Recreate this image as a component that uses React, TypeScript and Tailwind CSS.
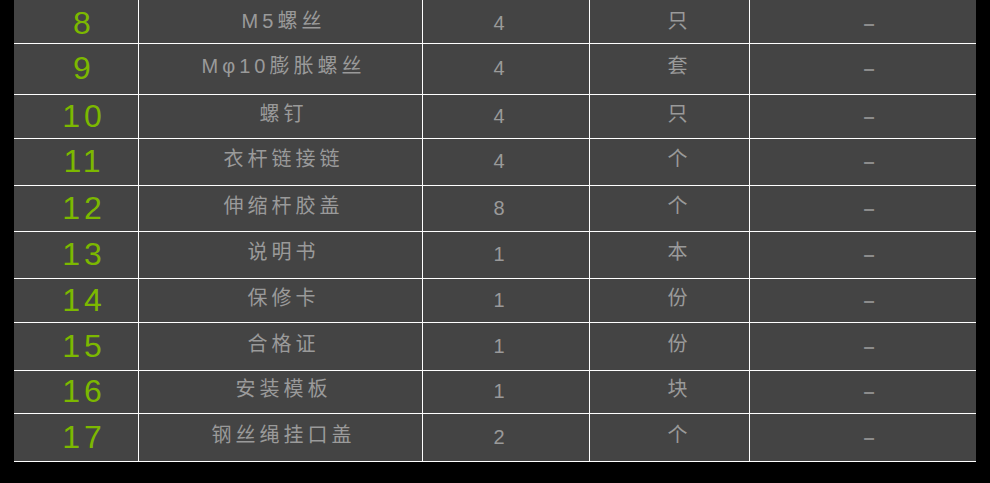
type Part = {
  no: number;
  name: string;
  qty: number;
  unit: string;
  h: string;
  pad?: string;
};

const parts: Part[] = [
  { no: 8, name: "M5螺丝", qty: 4, unit: "只", h: "h-[44px]", pad: "pt-[5px]" },
  { no: 9, name: "Mφ10膨胀螺丝", qty: 4, unit: "套", h: "h-[51px]" },
  { no: 10, name: "螺钉", qty: 4, unit: "只", h: "h-[44px]" },
  { no: 11, name: "衣杆链接链", qty: 4, unit: "个", h: "h-[47px]" },
  { no: 12, name: "伸缩杆胶盖", qty: 8, unit: "个", h: "h-[46px]" },
  { no: 13, name: "说明书", qty: 1, unit: "本", h: "h-[47px]" },
  { no: 14, name: "保修卡", qty: 1, unit: "份", h: "h-[44px]" },
  { no: 15, name: "合格证", qty: 1, unit: "份", h: "h-[48px]" },
  { no: 16, name: "安装模板", qty: 1, unit: "块", h: "h-[43px]" },
  { no: 17, name: "钢丝绳挂口盖", qty: 2, unit: "个", h: "h-[48px]" },
];

const font = "font-['Liberation_Sans','Noto_Sans_CJK_SC',sans-serif]";

function PartRow({ part }: { part: Part }) {
  const pad = part.pad ?? "";
  return (
    <div
      className={`grid grid-cols-[125px_284px_167px_160px_226px] border-b border-white bg-[#444444] ${part.h}`}
    >
      <div className={`flex items-center justify-center border-r border-white pb-[2px] pl-[16px] text-[32px] leading-none tracking-[4px] text-[#7cb800] ${pad}`}>
        {part.no}
      </div>
      <div className={`flex items-center justify-center border-r border-white pb-[6px] pl-[6px] text-[20px] leading-none tracking-[4px] text-[#9a9a9a] ${pad}`}>
        {part.name}
      </div>
      <div className={`flex items-center justify-center border-r border-white pb-[2px] pr-[14px] text-[20px] leading-none text-[#9a9a9a] ${pad}`}>
        {part.qty}
      </div>
      <div className={`flex items-center justify-center border-r border-white pb-[6px] pl-[16px] text-[20px] leading-none text-[#9a9a9a] ${pad}`}>
        {part.unit}
      </div>
      <div className={`flex items-center justify-center pb-[2px] pl-[12px] text-[20px] font-bold leading-none text-[#8c8c8c] ${pad}`}>
        –
      </div>
    </div>
  );
}

export default function App() {
  return (
    <div className={`h-[483px] w-[990px] overflow-hidden bg-black pl-[14px] ${font}`}>
      <div className="w-[962px]">
        {parts.map((p) => (
          <PartRow key={p.no} part={p} />
        ))}
      </div>
    </div>
  );
}
